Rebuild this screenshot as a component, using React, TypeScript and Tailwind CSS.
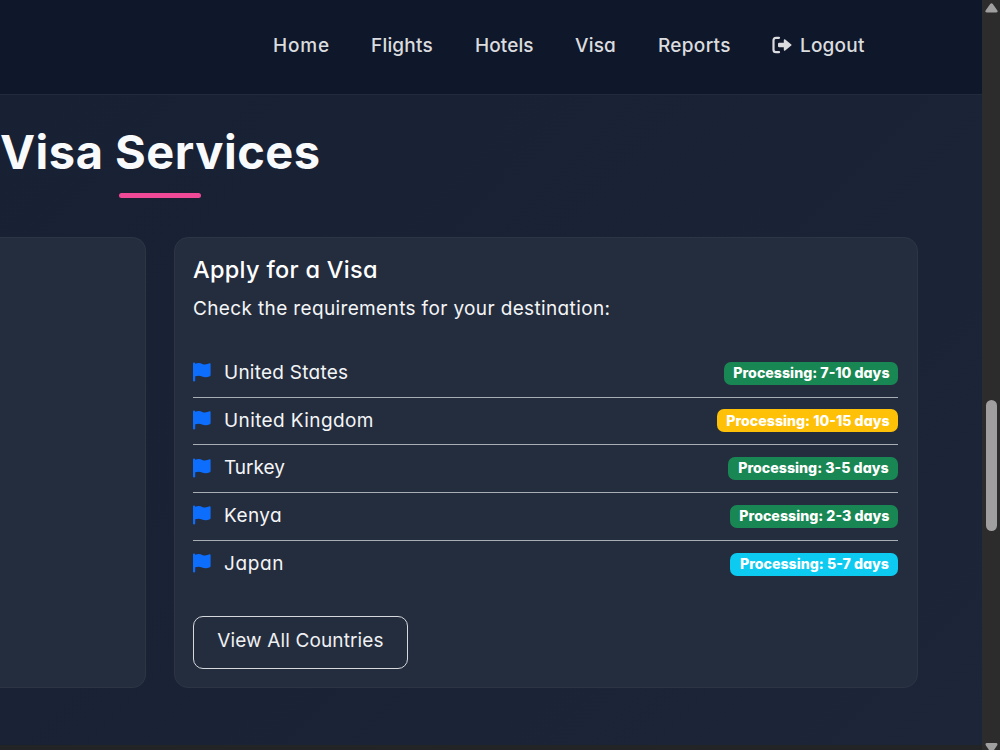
const navLinks = [
  { label: "Home", className: "w-[56px] tracking-[0.8px]" },
  { label: "Flights", className: "w-[62px] tracking-[0.2px]" },
  { label: "Hotels", className: "w-[58px] tracking-[0.1px]" },
  { label: "Visa", className: "w-[41px] tracking-[0.2px]" },
  { label: "Reports", className: "w-[72px] tracking-[0.3px]" },
]

const countries = [
  { name: "United States", time: "7-10 days", badge: "bg-[#198754] w-[174px]", text: "tracking-[0.25px]" },
  { name: "United Kingdom", time: "10-15 days", badge: "bg-[#ffc107] w-[181px]", text: "tracking-[0.4px]" },
  { name: "Turkey", time: "3-5 days", badge: "bg-[#198754] w-[170px]", text: "" },
  { name: "Kenya", time: "2-3 days", badge: "bg-[#198754] w-[168px]", text: "tracking-[0.4px]" },
  { name: "Japan", time: "5-7 days", badge: "bg-[#0dcaf0] w-[168px]", text: "tracking-[0.6px]" },
]

function LogoutIcon() {
  return (
    <svg className="w-[20px] h-[18px] mb-[3px]" viewBox="0 0 20 18">
      <path d="M7 1.8H4Q1.5 1.8 1.5 4.3V13.7Q1.5 16.2 4 16.2H7" fill="none" stroke="currentColor" strokeWidth="2.2" strokeLinecap="round" />
      <path
        d="M6 8Q6 6.7 7.3 6.7H11.8V4.2Q11.9 2.6 13.2 3.5L19.3 8.4Q19.9 9 19.3 9.6L13.2 14.5Q11.9 15.4 11.8 13.8V11.3H7.3Q6 11.3 6 10Z"
        fill="currentColor"
      />
    </svg>
  )
}

function FlagIcon() {
  return (
    <svg className="w-[18px] h-[20px] mr-[13px] mb-[2px] text-[#0d6efd]" viewBox="0 0 18 20" fill="currentColor">
      <path d="M0 1.5Q0 .5 1.1 .5T2.2 1.7Q6.2 .4 9.3 1.9C12 3.1 14.3 2.3 16.4 1.3Q17.6 1 17.6 2.1V13.2Q17.5 13.9 16.8 14.2C14.2 15.4 11.7 15.5 9 14.4Q5.8 13.1 2.2 14.3V18.4Q2.2 19.4 1.1 19.4T0 18.4Z" />
    </svg>
  )
}

function Navbar() {
  return (
    <nav className="h-[95px] shrink-0 bg-[#0f172a] border-b border-[#222b3c] flex items-center pl-[273px] pb-[1px] gap-[42px] text-[19px] font-medium text-[#dbdcdf] whitespace-nowrap">
      {navLinks.map((link) => (
        <a key={link.label} className={link.className}>
          {link.label}
        </a>
      ))}
      <a className="flex items-center gap-[8px] tracking-[0.2px]">
        <LogoutIcon />
        Logout
      </a>
    </nav>
  )
}

function VisaCard() {
  return (
    <div className="w-[744px] h-[451px] rounded-[14px] border border-[#2d3545] bg-[#242d3e] pl-[18px] pr-[18.6px] pt-[15px] text-[#f4f5f7]">
      <h5 className="text-[23.5px] leading-[34px] font-medium text-white tracking-[0.3px]">Apply for a Visa</h5>
      <p className="text-[19px] leading-[29px] mt-[7px] tracking-[0.36px]">Check the requirements for your destination:</p>
      <ul className="mt-[27px]">
        {countries.map((country) => (
          <li
            key={country.name}
            className="h-[47.65px] flex items-center justify-between border-b border-[#a9aeb6] last:border-b-0"
          >
            <span className="flex items-center text-[19px]">
              <FlagIcon />
              <span className={country.text}>{country.name}</span>
            </span>
            <span
              className={`h-[23px] rounded-[7px] flex items-center justify-center pb-px text-[14.2px] font-extrabold text-white whitespace-nowrap ${country.badge}`}
            >
              Processing: {country.time}
            </span>
          </li>
        ))}
      </ul>
      <button className="mt-[28px] w-[215px] h-[53px] pb-[2px] rounded-[10px] border border-[#d5d8dc] text-[19px] text-[#eff0f2] tracking-[0.13px]">
        View All Countries
      </button>
    </div>
  )
}

function Scrollbar() {
  return (
    <div className="w-[18px] h-full bg-[#2c2c2c] flex flex-col items-center pl-px shrink-0">
      <svg className="w-[13px] h-[10px] mt-[3px]" viewBox="0 0 13 10" fill="#9f9f9f">
        <path d="M5.2 1Q6.5-.4 7.8 1L12.4 7.4Q13 9.5 11 9.5H2Q0 9.5.6 7.4Z" />
      </svg>
      <div className="w-[11px] h-[131px] mt-[387px] rounded-full bg-[#9f9f9f]" />
      <svg className="w-[13px] h-[7px] mt-auto" viewBox="0 0 13 7" fill="#9f9f9f">
        <path d="M1.5 0H11.5Q13 .5 12.4 2L9 7H4L.6 2Q0 .5 1.5 0Z" />
      </svg>
    </div>
  )
}

export default function App() {
  return (
    <div className="w-[1000px] h-[750px] overflow-hidden flex bg-[#222426] font-['Inter',sans-serif] [font-feature-settings:'cv11']">
      <div className="w-[982px] flex flex-col">
        <Navbar />
        <main className="h-[650px] bg-linear-135 from-[#182033] to-[#1c2638]">
          <header className="w-[320px] pt-[28px]">
            <h2 className="text-[47px] leading-[57px] font-bold tracking-[0.5px] text-[#f8fafc] whitespace-nowrap [font-feature-settings:normal]">
              Visa Services
            </h2>
            <div className="w-[82px] h-[5px] mt-[13px] ml-[118.5px] rounded-full bg-[#f04997]" />
          </header>
          <div className="flex gap-[28px] mt-[39px]">
            <div className="w-[146px] h-[451px] rounded-r-[14px] border border-l-0 border-[#2d3545] bg-[#242d3e]" />
            <VisaCard />
          </div>
        </main>
      </div>
      <Scrollbar />
    </div>
  )
}
